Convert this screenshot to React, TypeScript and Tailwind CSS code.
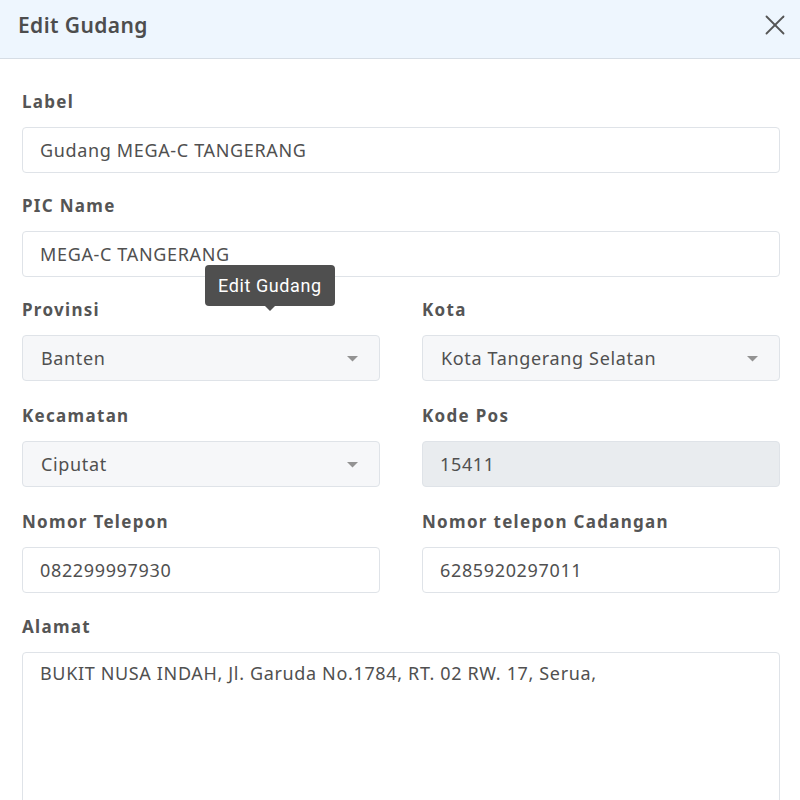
import { X } from 'lucide-react'

function Label({ children }: { children: React.ReactNode }) {
  return (
    <div className="text-[17px] font-bold text-[#555555] leading-5 mb-[15px] tracking-[1.3px]">{children}</div>
  )
}

function TextInput({ value, disabled }: { value: string; disabled?: boolean }) {
  return (
    <div
      className={`h-[46px] rounded border border-[#dfe3e8] px-[17px] flex items-center text-[18px] tracking-[0.65px] text-[#505050] ${
        disabled ? 'bg-[#e9ecef]' : 'bg-white'
      }`}
    >
      {value}
    </div>
  )
}

function SelectInput({ value }: { value: string }) {
  return (
    <div className="h-[46px] rounded border border-[#dfe3e8] bg-[#f6f7f9] pl-[18px] pr-[21px] flex items-center justify-between text-[18px] tracking-[0.65px] text-[#505050]">
      <span>{value}</span>
      <svg width="11" height="6" viewBox="0 0 11 6" className="mt-[2px]">
        <path d="M0 0h11L5.5 5.5z" fill="#939393" />
      </svg>
    </div>
  )
}

export default function App() {
  return (
    <div className="w-[800px] h-[800px] overflow-hidden bg-white font-['Noto_Sans',sans-serif]">
      {/* Header */}
      <div className="h-[59px] bg-[#eef6fe] border-b border-[#d6dde5] flex items-start justify-between pl-[18px] pr-[8px] pt-[9px]">
        <h2 className="text-[21px] font-semibold text-[#4d4d4d] tracking-[0.4px] leading-[32px]">Edit Gudang</h2>
        <X size={34} strokeWidth={1.3} className="text-[#555555] -mt-[1px]" />
      </div>

      {/* Form */}
      <div className="pl-[22px] pr-[20px] pt-[33px] flex flex-col gap-[23px]">
        <div>
          <Label>Label</Label>
          <TextInput value="Gudang MEGA-C TANGERANG" />
        </div>
        <div>
          <Label>PIC Name</Label>
          <TextInput value="MEGA-C TANGERANG" />
        </div>
        <div className="grid grid-cols-2 gap-x-[42px] gap-y-[25px]">
          <div className="relative">
            <Label>Provinsi</Label>
            <SelectInput value="Banten" />
            <div className="absolute left-[183px] top-[-35px] bg-[#4f4f4f] text-white rounded px-[13px] h-[41px] flex items-center text-[18px] tracking-[0.6px] font-['Roboto',sans-serif]">
              Edit Gudang
              <div className="absolute left-[59px] bottom-[-5px] w-0 h-0 border-l-[6px] border-r-[6px] border-t-[6px] border-l-transparent border-r-transparent border-t-[#4f4f4f]" />
            </div>
          </div>
          <div>
            <Label>Kota</Label>
            <SelectInput value="Kota Tangerang Selatan" />
          </div>
          <div>
            <Label>Kecamatan</Label>
            <SelectInput value="Ciputat" />
          </div>
          <div>
            <Label>Kode Pos</Label>
            <TextInput value="15411" disabled />
          </div>
          <div>
            <Label>Nomor Telepon</Label>
            <TextInput value="082299997930" />
          </div>
          <div>
            <Label>Nomor telepon Cadangan</Label>
            <TextInput value="6285920297011" />
          </div>
        </div>
        <div className="mt-[1px]">
          <Label>Alamat</Label>
          <div className="h-[170px] rounded border border-[#dfe3e8] bg-white px-[17px] pt-[7px] text-[18px] tracking-[0.65px] text-[#505050]">
            BUKIT NUSA INDAH, Jl. Garuda No.1784, RT. 02 RW. 17, Serua,
          </div>
        </div>
      </div>
    </div>
  )
}
